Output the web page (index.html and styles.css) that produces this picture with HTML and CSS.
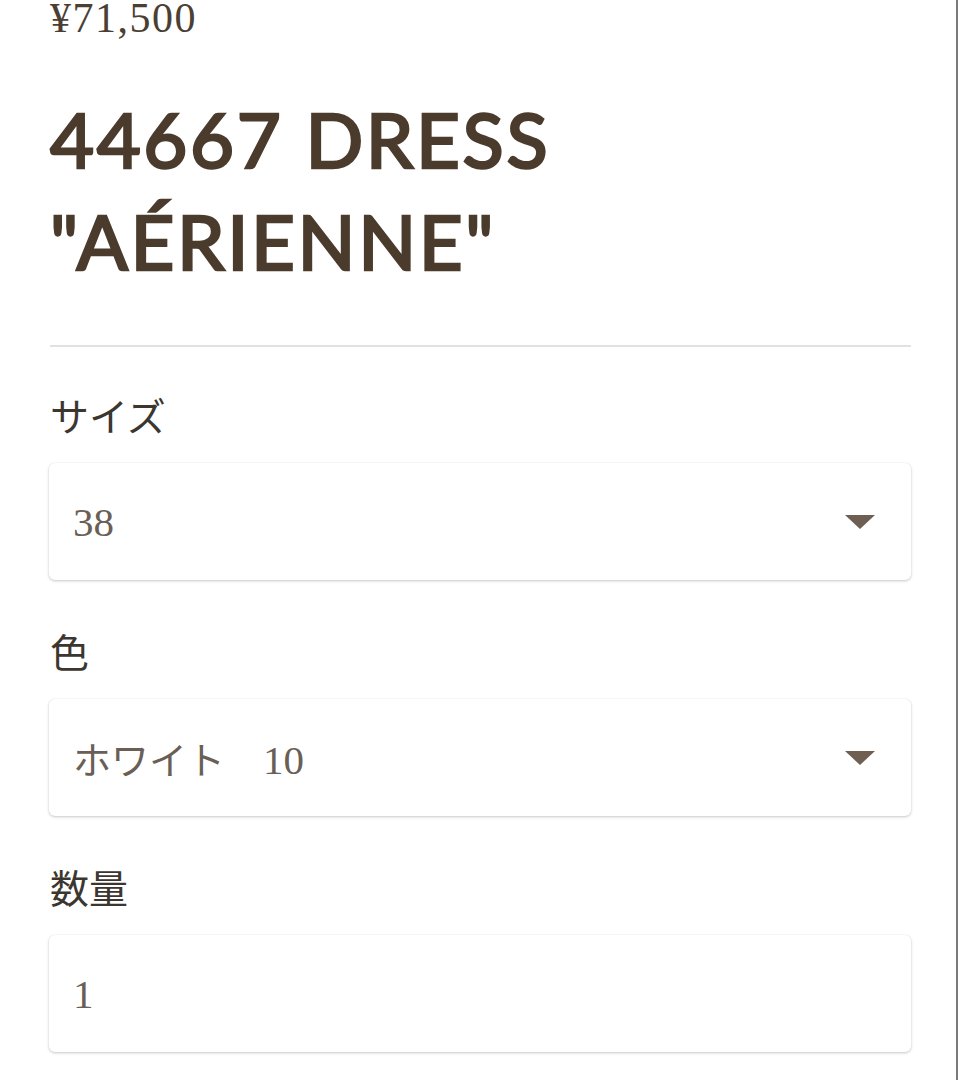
FILE: index.html
```html
<!DOCTYPE html>
<html lang="ja">
<head>
<meta charset="utf-8">
<link rel="stylesheet" href="styles.css">
</head>
<body>
<div class="frame">
  <main class="product">
    <p class="price">¥71,500</p>
    <h1 class="title">44667 DRESS<br>"AÉRIENNE"</h1>
    <hr class="divider">
    <div class="field">
      <label class="label">サイズ</label>
      <div class="control">
        <span class="value">38</span>
        <svg class="caret" viewBox="0 0 30 14" width="30" height="14"><polygon points="0,0 30,0 15,14" fill="#6e5f52"/></svg>
      </div>
    </div>
    <div class="field">
      <label class="label">色</label>
      <div class="control">
        <span class="value"><span class="jp">ホワイト　</span>10</span>
        <svg class="caret" viewBox="0 0 30 14" width="30" height="14"><polygon points="0,0 30,0 15,14" fill="#6e5f52"/></svg>
      </div>
    </div>
    <div class="field">
      <label class="label">数量</label>
      <div class="control">
        <span class="value">1</span>
      </div>
    </div>
  </main>
</div>
</body>
</html>
```

FILE: styles.css
```css
html, body {
  margin: 0;
  padding: 0;
  background: #ffffff;
}
body {
  height: 1080px;
  overflow: hidden;
}
.frame {
  width: 956px;
  height: 1080px;
  border-right: 2px solid #7a7a7a;
  box-sizing: content-box;
  background: #fff;
}
.product {
  padding: 0 45px 0 49px;
}
.price {
  margin: 0 0 0 1px;
  font-family: "Liberation Serif", serif;
  font-size: 42px;
  line-height: 36px;
  color: #4b3e33;
  letter-spacing: 1.5px;
}
.title {
  margin: 52px 0 0 1px;
  font-family: "Lato", "Liberation Sans", sans-serif;
  font-weight: 400;
  font-size: 76px;
  line-height: 102px;
  color: #4a3b2d;
  letter-spacing: 2.6px;
  -webkit-text-stroke: 2.6px #4a3b2d;
}
.divider {
  margin: 53px 0 0 1px;
  border: 0;
  height: 2px;
  background: #e3e1df;
}
.field {
  margin-top: 46px;
}
.field:first-of-type {
  margin-top: 43px;
}
.label {
  display: block;
  font-family: "Noto Sans CJK JP", sans-serif;
  font-size: 39px;
  line-height: 48px;
  color: #3c3631;
  margin-left: 1px;
}
.control {
  margin-top: 25px;
  height: 117px;
  background: #fff;
  border-radius: 6px;
  box-shadow: 0 1px 3px rgba(0,0,0,0.22), 0 0 1px rgba(0,0,0,0.08);
  display: flex;
  align-items: center;
  justify-content: space-between;
  padding: 0 36px 0 24px;
}
.value {
  font-family: "Liberation Serif", serif;
  font-size: 41px;
  color: #6a5f56;
}
.jp {
  font-family: "Noto Sans CJK JP", sans-serif;
  font-size: 38px;
}
.caret {
  display: block;
}
```
